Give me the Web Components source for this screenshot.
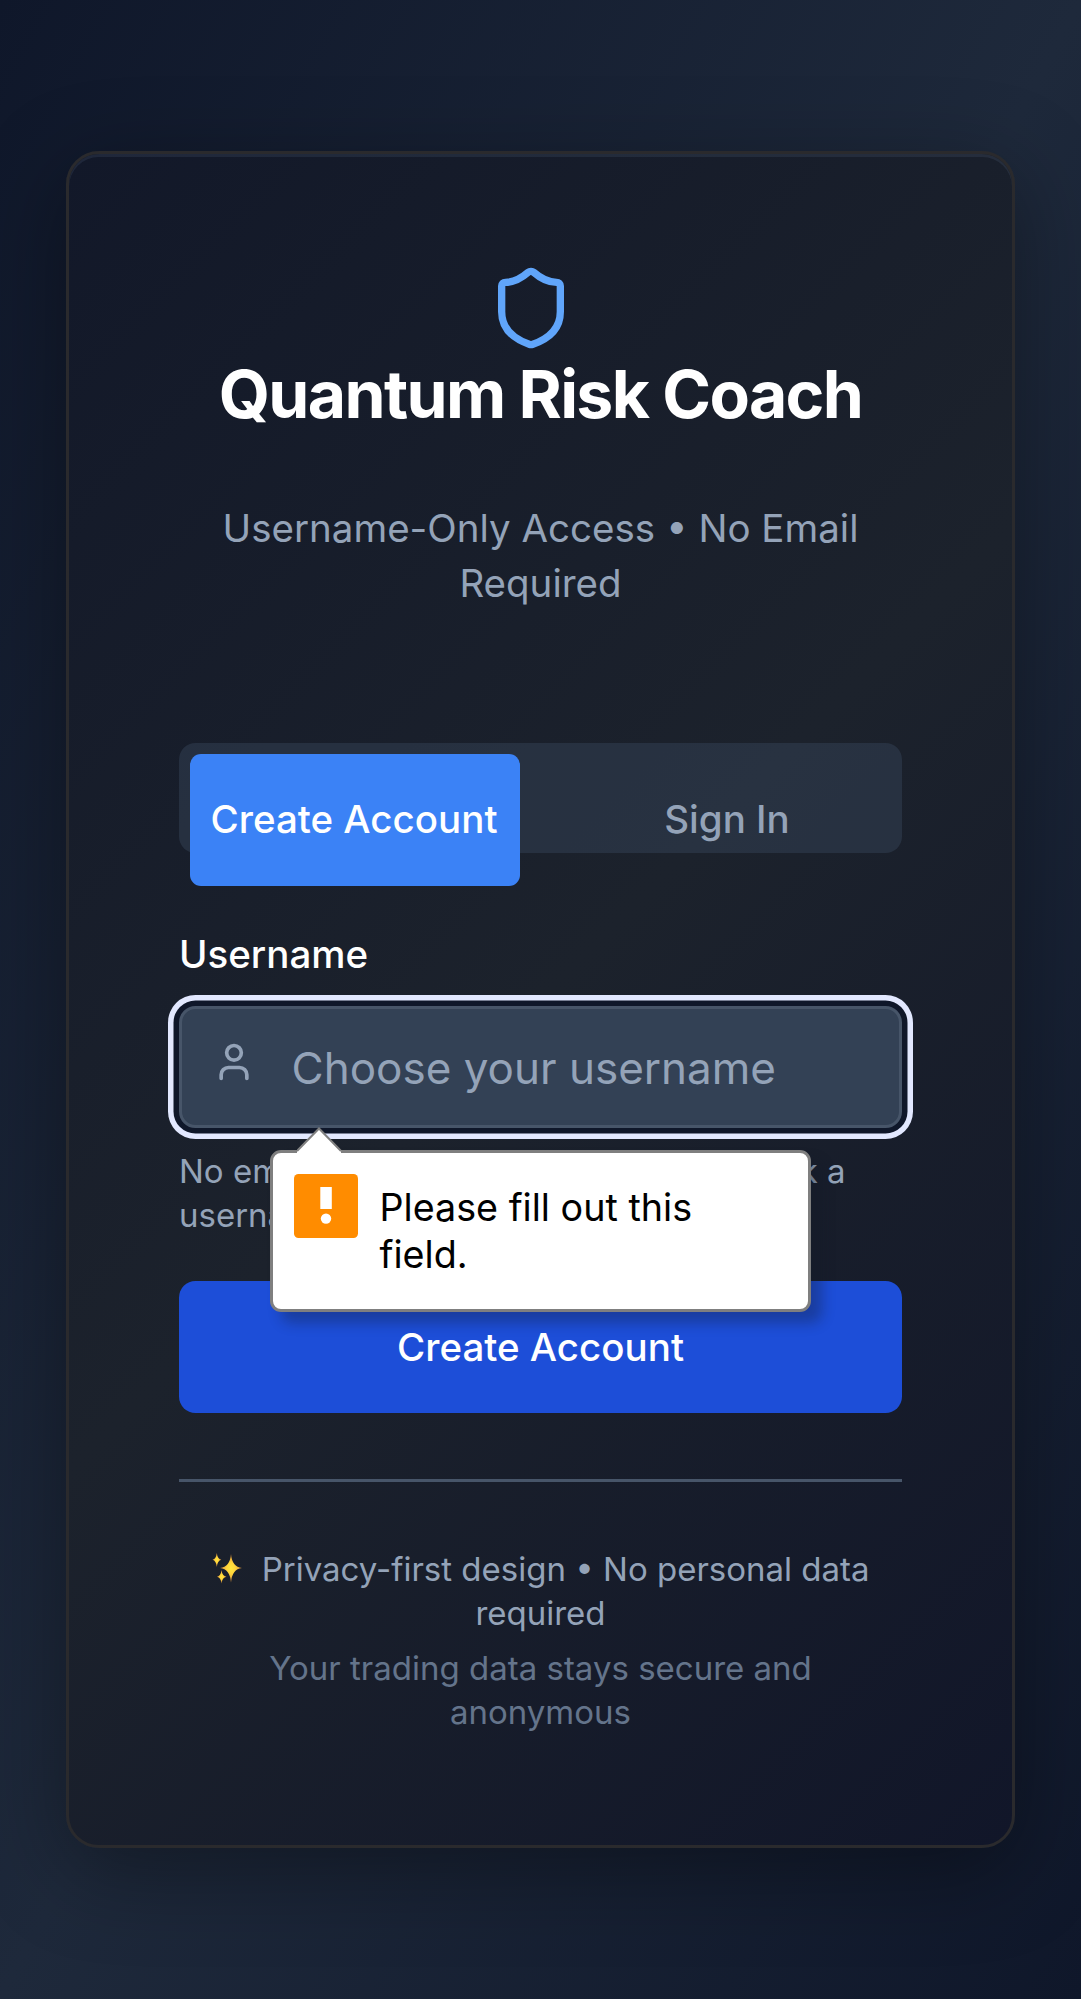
<!DOCTYPE html>
<html lang="en">
<head>
<meta charset="utf-8">
<title>Quantum Risk Coach</title>
<style>
  html, body { margin: 0; height: 100%; }
  body { font-family: Inter, sans-serif; background: #0f172a; overflow: hidden; }
</style>
</head>
<body>
<auth-page>
  <auth-card>
    <brand-header>
      <span slot="title">Quantum Risk Coach</span>
      <span slot="subtitle">Username-Only Access • No Email Required</span>
    </brand-header>
    <tab-list>
      <tab-item active>Create Account</tab-item>
      <tab-item>Sign In</tab-item>
    </tab-list>
    <username-field>
      <span slot="label">Username</span>
      <span slot="placeholder">Choose your username</span>
      <span slot="hint">No email or password required. Just pick a username</span>
      <validation-bubble slot="bubble">Please fill out this field.</validation-bubble>
    </username-field>
    <submit-button>Create Account</submit-button>
    <card-footer>
      <span slot="primary">Privacy-first design • No personal data required</span>
      <span slot="secondary">Your trading data stays secure and anonymous</span>
    </card-footer>
  </auth-card>
</auth-page>
<script>
const define = (name, html) => customElements.define(name, class extends HTMLElement {
  constructor() {
    super();
    const template = document.createElement('template');
    template.innerHTML = html;
    this.attachShadow({ mode: 'open' }).append(template.content.cloneNode(true));
  }
});

define('auth-page', `
  <style>
    :host { display: flex; box-sizing: border-box; width: 1081px; height: 1999px; padding: 0 66px;
      align-items: center; justify-content: center;
      background: linear-gradient(to bottom right, #0f172a, #1e293b 50%, #0f172a); }
    ::slotted(*) { flex: 1; }
  </style>
  <slot></slot>`);

define('auth-card', `
  <style>
    :host { display: flex; flex-direction: column; box-sizing: border-box; height: 1697px; padding: 110px;
      border: 3px solid #2a2a2d; border-radius: 33px;
      background: linear-gradient(135deg, #121829, #1c222c 50%, #111629);
      box-shadow: 0 22px 88px rgba(0,0,0,.36), inset 0 3px 0 rgba(148,180,220,.1); }
  </style>
  <slot></slot>`);

define('brand-header', `
  <style>
    :host { display: flex; flex-direction: column; align-items: center; text-align: center; }
    svg { display: block; margin-right: 20px; color: #60a5fa; }
    h1 { margin: -2px 0 0; font: 700 66px/88px Inter, sans-serif; letter-spacing: -.025em; color: #fff; white-space: nowrap; }
    p { margin: 63px 0 0; font-size: 38.5px; line-height: 55px; color: #94a3b8; }
  </style>
  <svg width="88" height="88" viewBox="0 0 24 24" fill="none" stroke="currentColor" stroke-width="2" stroke-linecap="round" stroke-linejoin="round"><path d="M20 13c0 5-3.5 7.5-7.66 8.95a1 1 0 0 1-.67-.01C7.5 20.5 4 18 4 13V6a1 1 0 0 1 1-1c2 0 4.5-1.2 6.24-2.72a1.17 1.17 0 0 1 1.52 0C14.51 3.81 17 5 19 5a1 1 0 0 1 1 1z"/></svg>
  <h1><slot name="title"></slot></h1>
  <p><slot name="subtitle"></slot></p>`);

define('tab-list', `
  <style>
    :host { display: flex; justify-content: space-between; align-items: flex-start; box-sizing: border-box;
      height: 110px; margin-top: 131.5px; padding: 11px; border-radius: 16.5px; background: rgba(51,65,85,.5); }
  </style>
  <slot></slot>`);

define('tab-item', `
  <style>
    :host { display: flex; align-items: center; justify-content: center; box-sizing: border-box; width: 328px; height: 132px;
      border-radius: 11px; font-size: 38.5px; font-weight: 500; line-height: 55px; color: #94a3b8; white-space: nowrap; }
    :host([active]) { width: 330px; padding-right: 2px; background: #3b82f6; color: #fff; }
  </style>
  <slot></slot>`);

define('username-field', `
  <style>
    :host { display: flex; flex-direction: column; position: relative; margin-top: 74.5px; }
    .label { font-size: 38.5px; font-weight: 500; line-height: 55px; color: #fff; }
    .input { display: flex; align-items: flex-start; box-sizing: border-box; height: 122px; margin-top: 24px;
      padding: 0 30px; border: 3px solid #475569; border-radius: 16.5px; background: #334155;
      box-shadow: 0 0 0 5.5px #0f172a, 0 0 0 11px #e2e8ff; }
    svg { margin: 30.500px 0 0 -.5px; color: #94a3b8; }
    .placeholder { margin: 29px 0 0 36px; font-size: 44px; line-height: 60px; color: #94a3b8; white-space: nowrap; }
    .hint { margin-top: 21px; font-size: 33px; line-height: 44px; color: #94a3b8; }
    ::slotted(validation-bubble) { position: absolute; left: 91px; top: 200px; }
  </style>
  <div class="label"><slot name="label"></slot></div>
  <div class="input">
    <svg width="44" height="44" viewBox="0 0 24 24" fill="none" stroke="currentColor" stroke-width="2" stroke-linecap="round" stroke-linejoin="round"><path d="M19 21v-2a4 4 0 0 0-4-4H9a4 4 0 0 0-4 4v2"/><circle cx="12" cy="7" r="4"/></svg>
    <div class="placeholder"><slot name="placeholder"></slot></div>
  </div>
  <div class="hint"><slot name="hint"></slot></div>
  <slot name="bubble"></slot>`);

define('validation-bubble', `
  <style>
    :host { display: flex; flex-direction: column; width: 541px; }
    .arrow { display: block; margin-left: 27px; z-index: 1; }
    .box { display: flex; align-items: flex-start; box-sizing: border-box; height: 162px; margin-top: -3px; padding: 21px 20px;
      border: 3px solid #7f7f7f; border-radius: 11px; background: #fff; box-shadow: 11px 11px 13px rgba(20,25,40,.32); }
    .mark { flex: none; margin-left: .5px; }
    p { margin: 10px 0 0 22px; width: 400px; font-size: 37.7px; line-height: 47px; color: #000; }
  </style>
  <svg class="arrow" width="45" height="26" viewBox="0 0 45 26"><path d="M0 26V23.500L22 1L44 23.500V26Z" fill="#fff"/><path d="M0 24L22 1.500L44 24" fill="none" stroke="#7f7f7f" stroke-width="2"/></svg>
  <div class="box">
    <svg class="mark" width="64" height="64" viewBox="0 0 64 64"><rect width="64" height="64" rx="4.500" fill="#ff8c00"/><rect x="26.300" y="13" width="11.500" height="22" fill="#fff"/><circle cx="32" cy="44.600" r="5.200" fill="#fff"/></svg>
    <p><slot></slot></p>
  </div>`);

define('submit-button', `
  <style>
    :host { display: flex; align-items: center; justify-content: center; height: 132px; margin-top: 44px;
      border-radius: 16.5px; background: #1d4ed8; color: #fff; font-size: 38.5px; font-weight: 500; line-height: 55px; }
  </style>
  <slot></slot>`);

define('card-footer', `
  <style>
    :host { display: flex; flex-direction: column; gap: 11px; margin-top: 66px; padding-top: 64.5px;
      border-top: 3px solid #475569; text-align: center; font-size: 33px; line-height: 44px; color: #94a3b8; }
    p { margin: 0; }
    .muted { color: #64748b; }
    svg { vertical-align: -3.5px; margin-right: 2px; overflow: visible; }
  </style>
  <p><svg width="39" height="32" viewBox="-1.500 0 39 32"><defs><radialGradient id="g"><stop offset="0" stop-color="#ffe83d"/><stop offset=".4" stop-color="#ffd43b"/><stop offset="1" stop-color="#d98a3c"/></radialGradient></defs><g fill="url(#g)"><path d="M18.500 2Q19.500 14.800 29.500 16Q19.500 17.200 18.500 30.500Q17.500 17.200 7.500 16Q17.500 14.800 18.500 2Z"/><path d="M4.300 1Q5 7 8.800 7.700Q5 8.400 4.300 15Q3.600 8.400 0 7.700Q3.600 7 4.300 1Z"/><path d="M9 18Q9.700 24 14 24.700Q9.700 25.400 9 31.500Q8.300 25.400 4.500 24.700Q8.300 24 9 18Z"/></g></svg> <slot name="primary"></slot></p>
  <p class="muted"><slot name="secondary"></slot></p>`);
</script>
</body>
</html>
